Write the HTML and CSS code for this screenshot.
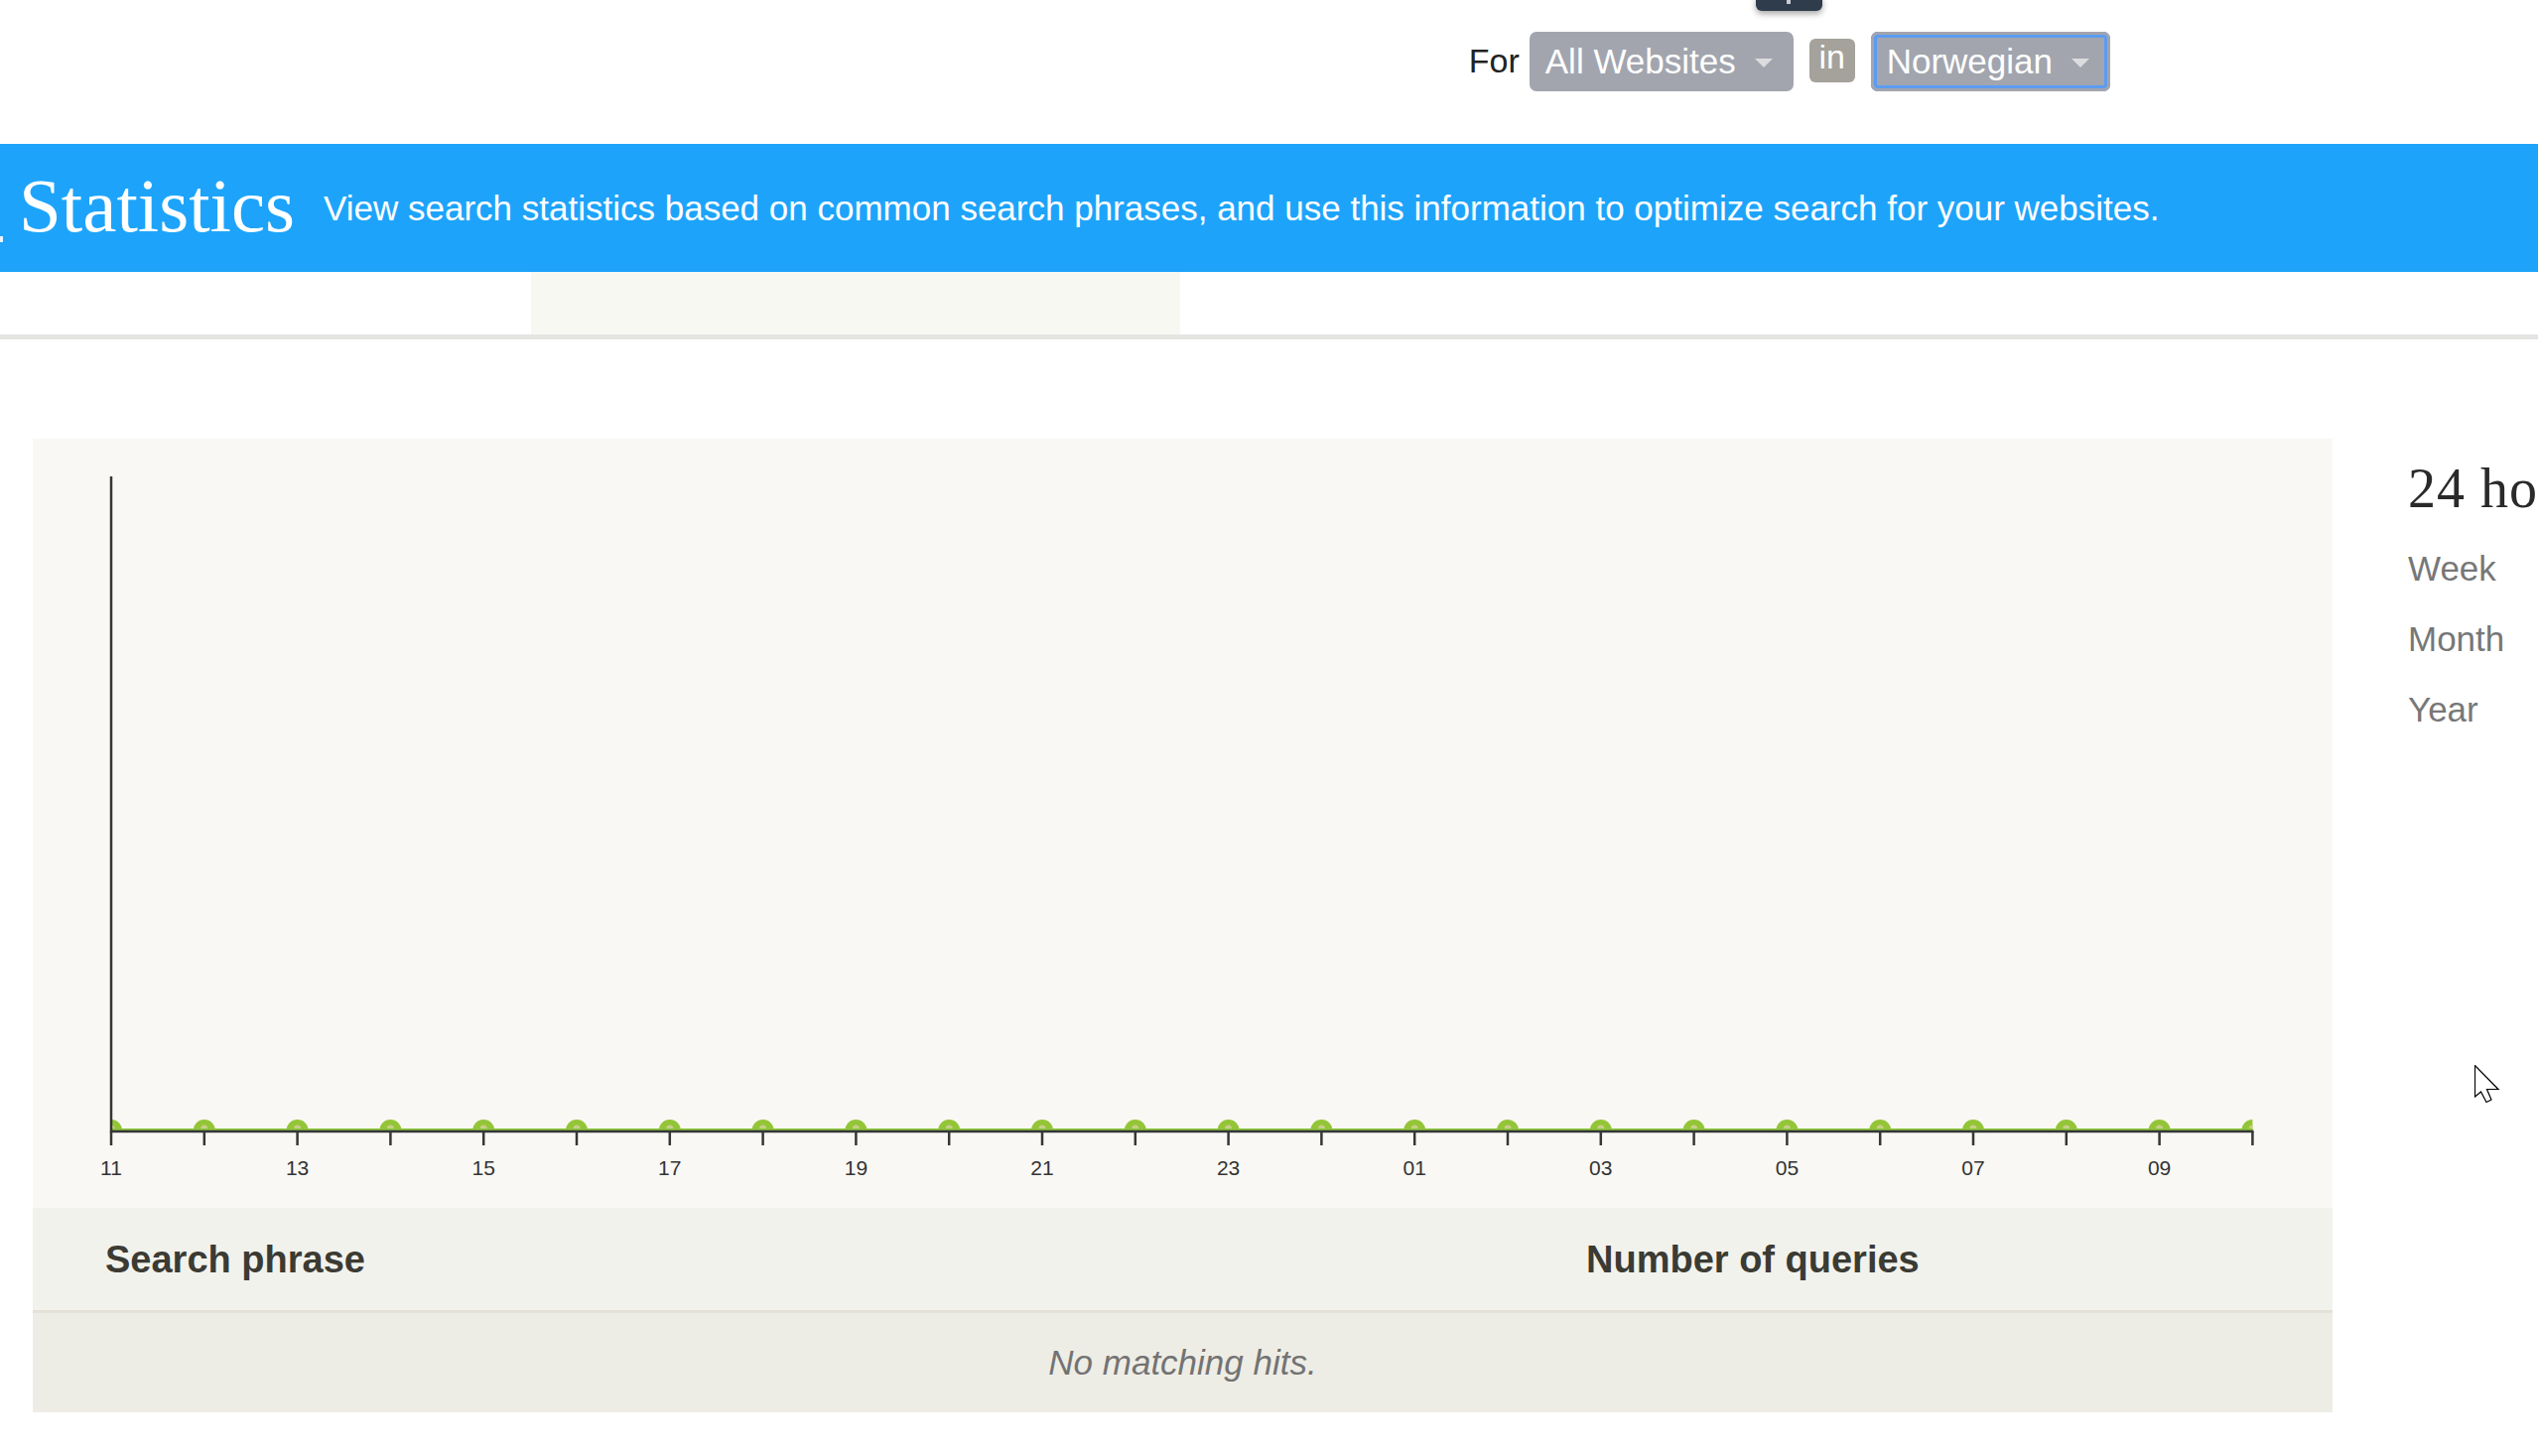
FILE: index.html
```html
<!DOCTYPE html>
<html lang="en">
<head>
<meta charset="utf-8">
<title>Statistics</title>
<link rel="stylesheet" href="styles.css">
</head>
<body>
<div class="tip-stub"><span class="tip-mark"></span></div>

<header class="topbar">
  <div class="context">
    <span class="for-label">For</span>
    <button class="select">All Websites<span class="caret"></span></button>
    <span class="in-badge">in</span>
    <button class="select focused">Norwegian<span class="caret"></span></button>
  </div>
</header>

<section class="banner">
  <span class="edge-mark"></span>
  <h1 class="banner-title">Statistics</h1>
  <p class="banner-desc">View search statistics based on common search phrases, and use this information to optimize search for your websites.</p>
</section>

<nav class="tabstrip">
  <div class="tab-active"></div>
</nav>
<div class="rule"></div>

<main class="content">
  <div class="panel">
    <div class="chart">
      <svg width="2317" height="775" viewBox="0 0 2317 775">
        <defs>
          <clipPath id="plot"><rect x="79" y="0" width="2157.4" height="697"/></clipPath>
        </defs>
        <g clip-path="url(#plot)" class="dots">
          <g class="dot"><circle cx="79" cy="697" r="11"/><circle class="core" cx="79" cy="695" r="3.5"/></g>
          <g class="dot"><circle cx="172.8" cy="697" r="11"/><circle class="core" cx="172.8" cy="695" r="3.5"/></g>
          <g class="dot"><circle cx="266.6" cy="697" r="11"/><circle class="core" cx="266.6" cy="695" r="3.5"/></g>
          <g class="dot"><circle cx="360.4" cy="697" r="11"/><circle class="core" cx="360.4" cy="695" r="3.5"/></g>
          <g class="dot"><circle cx="454.2" cy="697" r="11"/><circle class="core" cx="454.2" cy="695" r="3.5"/></g>
          <g class="dot"><circle cx="548" cy="697" r="11"/><circle class="core" cx="548" cy="695" r="3.5"/></g>
          <g class="dot"><circle cx="641.8" cy="697" r="11"/><circle class="core" cx="641.8" cy="695" r="3.5"/></g>
          <g class="dot"><circle cx="735.6" cy="697" r="11"/><circle class="core" cx="735.6" cy="695" r="3.5"/></g>
          <g class="dot"><circle cx="829.4" cy="697" r="11"/><circle class="core" cx="829.4" cy="695" r="3.5"/></g>
          <g class="dot"><circle cx="923.2" cy="697" r="11"/><circle class="core" cx="923.2" cy="695" r="3.5"/></g>
          <g class="dot"><circle cx="1017" cy="697" r="11"/><circle class="core" cx="1017" cy="695" r="3.5"/></g>
          <g class="dot"><circle cx="1110.8" cy="697" r="11"/><circle class="core" cx="1110.8" cy="695" r="3.5"/></g>
          <g class="dot"><circle cx="1204.6" cy="697" r="11"/><circle class="core" cx="1204.6" cy="695" r="3.5"/></g>
          <g class="dot"><circle cx="1298.4" cy="697" r="11"/><circle class="core" cx="1298.4" cy="695" r="3.5"/></g>
          <g class="dot"><circle cx="1392.2" cy="697" r="11"/><circle class="core" cx="1392.2" cy="695" r="3.5"/></g>
          <g class="dot"><circle cx="1486" cy="697" r="11"/><circle class="core" cx="1486" cy="695" r="3.5"/></g>
          <g class="dot"><circle cx="1579.8" cy="697" r="11"/><circle class="core" cx="1579.8" cy="695" r="3.5"/></g>
          <g class="dot"><circle cx="1673.6" cy="697" r="11"/><circle class="core" cx="1673.6" cy="695" r="3.5"/></g>
          <g class="dot"><circle cx="1767.4" cy="697" r="11"/><circle class="core" cx="1767.4" cy="695" r="3.5"/></g>
          <g class="dot"><circle cx="1861.2" cy="697" r="11"/><circle class="core" cx="1861.2" cy="695" r="3.5"/></g>
          <g class="dot"><circle cx="1955" cy="697" r="11"/><circle class="core" cx="1955" cy="695" r="3.5"/></g>
          <g class="dot"><circle cx="2048.8" cy="697" r="11"/><circle class="core" cx="2048.8" cy="695" r="3.5"/></g>
          <g class="dot"><circle cx="2142.6" cy="697" r="11"/><circle class="core" cx="2142.6" cy="695" r="3.5"/></g>
          <g class="dot"><circle cx="2236.4" cy="697" r="11"/><circle class="core" cx="2236.4" cy="695" r="3.5"/></g>
        </g>
        <line class="series" x1="79" y1="696" x2="2236.4" y2="696"/>
        <line class="axis" x1="79" y1="38" x2="79" y2="699"/>
        <line class="axis" x1="78" y1="698" x2="2237.5" y2="698"/>
        <g class="ticks">
          <line x1="79" y1="698" x2="79" y2="712"/>
          <line x1="172.8" y1="698" x2="172.8" y2="712"/>
          <line x1="266.6" y1="698" x2="266.6" y2="712"/>
          <line x1="360.4" y1="698" x2="360.4" y2="712"/>
          <line x1="454.2" y1="698" x2="454.2" y2="712"/>
          <line x1="548" y1="698" x2="548" y2="712"/>
          <line x1="641.8" y1="698" x2="641.8" y2="712"/>
          <line x1="735.6" y1="698" x2="735.6" y2="712"/>
          <line x1="829.4" y1="698" x2="829.4" y2="712"/>
          <line x1="923.2" y1="698" x2="923.2" y2="712"/>
          <line x1="1017" y1="698" x2="1017" y2="712"/>
          <line x1="1110.8" y1="698" x2="1110.8" y2="712"/>
          <line x1="1204.6" y1="698" x2="1204.6" y2="712"/>
          <line x1="1298.4" y1="698" x2="1298.4" y2="712"/>
          <line x1="1392.2" y1="698" x2="1392.2" y2="712"/>
          <line x1="1486" y1="698" x2="1486" y2="712"/>
          <line x1="1579.8" y1="698" x2="1579.8" y2="712"/>
          <line x1="1673.6" y1="698" x2="1673.6" y2="712"/>
          <line x1="1767.4" y1="698" x2="1767.4" y2="712"/>
          <line x1="1861.2" y1="698" x2="1861.2" y2="712"/>
          <line x1="1955" y1="698" x2="1955" y2="712"/>
          <line x1="2048.8" y1="698" x2="2048.8" y2="712"/>
          <line x1="2142.6" y1="698" x2="2142.6" y2="712"/>
          <line x1="2236.4" y1="698" x2="2236.4" y2="712"/>
        </g>
        <g class="labels">
          <text x="79" y="742">11</text>
          <text x="266.6" y="742">13</text>
          <text x="454.2" y="742">15</text>
          <text x="641.8" y="742">17</text>
          <text x="829.4" y="742">19</text>
          <text x="1017" y="742">21</text>
          <text x="1204.6" y="742">23</text>
          <text x="1392.2" y="742">01</text>
          <text x="1579.8" y="742">03</text>
          <text x="1767.4" y="742">05</text>
          <text x="1955" y="742">07</text>
          <text x="2142.6" y="742">09</text>
        </g>
      </svg>
    </div>
    <div class="table">
      <div class="thead">
        <div class="th">Search phrase</div>
        <div class="th">Number of queries</div>
      </div>
      <div class="empty">No matching hits.</div>
    </div>
  </div>

  <aside class="periods">
    <div class="period-current">24 hours</div>
    <ul class="period-list">
      <li>Week</li>
      <li>Month</li>
      <li>Year</li>
    </ul>
  </aside>
</main>

<svg class="cursor" width="26" height="40" viewBox="0 0 26 40">
  <path d="M0.5 0.5 L0.5 32 L6.5 27 L12 37.5 L17 35 L12.5 24.5 L24 24.5 Z" fill="#fff" stroke="#000" stroke-width="1.2" stroke-linejoin="miter"/>
</svg>
</body>
</html>
```
FILE: styles.css
```css
html, body {
  margin: 0;
  padding: 0;
  overflow: hidden;
  background: #ffffff;
}

body {
  font-family: "Liberation Sans", Arial, sans-serif;
  color: #333;
  position: relative;
  width: 2557px;
  min-height: 1467px;
}

/* --- dark tooltip stub peeking from the top --- */
.tip-stub {
  position: absolute;
  left: 1769px;
  top: -6px;
  width: 67px;
  height: 17px;
  background: #2e3c4b;
  border-radius: 6px;
  box-shadow: 0 3px 6px rgba(0, 0, 0, 0.35);
}
.tip-mark {
  position: absolute;
  left: 31px;
  top: 6px;
  width: 4px;
  height: 4px;
  background: #c9ced4;
}

/* --- top context bar --- */
.topbar {
  height: 145px;
  box-sizing: border-box;
  padding-top: 32px;
}
.context {
  display: flex;
  align-items: center;
  justify-content: flex-end;
  padding-right: 431px;
  height: 60px;
}
.for-label {
  font-size: 34px;
  color: #222;
  margin-right: 10px;
  position: relative;
  top: -1px;
}
.select {
  font-family: "Liberation Sans", Arial, sans-serif;
  font-size: 35px;
  color: #fff;
  background: #a2a5ae;
  border: none;
  border-radius: 7px;
  height: 60px;
  padding: 0 21px 0 16px;
  display: flex;
  align-items: center;
  cursor: pointer;
}
.select.focused {
  box-shadow: inset 0 0 0 3px #a2a5ae, inset 0 0 0 6px #5b9cf3;
}
.caret {
  display: inline-block;
  width: 0;
  height: 0;
  border-left: 9px solid transparent;
  border-right: 9px solid transparent;
  border-top: 9px solid #dcdcde;
  margin-left: 19px;
  margin-top: 2px;
}
.in-badge {
  font-size: 34px;
  color: #fff;
  background: #a4a29b;
  border-radius: 6px;
  width: 46px;
  height: 44px;
  display: flex;
  align-items: center;
  justify-content: center;
  margin: -3px 16px 0;
  box-sizing: border-box;
  padding-bottom: 6px;
}

/* --- blue banner --- */
.banner {
  position: relative;
  height: 129px;
  background: #1da4fa;
  display: flex;
  align-items: center;
  padding-left: 19px;
}
.edge-mark {
  position: absolute;
  left: 0;
  top: 93px;
  width: 3px;
  height: 6px;
  background: #e8f4fe;
}
.banner-title {
  margin: 0;
  font-family: "Liberation Serif", "Times New Roman", serif;
  font-weight: normal;
  font-size: 77px;
  line-height: 77px;
  color: #fff;
  position: relative;
  top: -2px;
}
.banner-desc {
  margin: 0 0 0 29px;
  font-size: 35px;
  line-height: 35px;
  color: #fff;
}

/* --- tab strip --- */
.tabstrip {
  height: 63px;
  display: flex;
}
.tab-active {
  margin-left: 535px;
  width: 654px;
  background: #f8f8f3;
}
.rule {
  height: 5px;
  background: #e4e4e2;
}

/* --- content --- */
.content {
  display: flex;
  align-items: flex-start;
  padding: 100px 0 0 33px;
  gap: 76px;
}
.panel {
  width: 2317px;
  flex: none;
}
.chart {
  height: 775px;
  background: #f9f8f4;
}
.chart svg {
  display: block;
}
.dot circle {
  fill: #93c537;
}
.dot circle.core {
  fill: #c6cf86;
}
.series {
  stroke: #8cc63f;
  stroke-width: 2;
}
.axis {
  stroke: #363636;
  stroke-width: 2.5;
}
.ticks line {
  stroke: #363636;
  stroke-width: 2.5;
}
.labels text {
  font-family: "Liberation Sans", Arial, sans-serif;
  font-size: 21px;
  fill: #333;
  text-anchor: middle;
}

.table {
  background: #f2f2ed;
}
.thead {
  display: grid;
  grid-template-columns: 1492px 1fr;
  padding-left: 73px;
  height: 103px;
  align-items: center;
  border-bottom: 3px solid #e3e1d8;
}
.th {
  font-size: 38px;
  font-weight: bold;
  color: #3b3b33;
  padding-top: 2px;
}
.empty {
  height: 100px;
  background: #eeede5;
  display: flex;
  align-items: center;
  justify-content: center;
  font-size: 35px;
  font-style: italic;
  color: #737373;
}

/* --- period nav --- */
.periods {
  flex: none;
  padding-top: 20px;
  white-space: nowrap;
}
.period-current {
  font-family: "Liberation Serif", "Times New Roman", serif;
  font-size: 56px;
  line-height: 60px;
  letter-spacing: 1px;
  color: #2a2a2a;
}
.period-list {
  list-style: none;
  margin: 15px 0 0;
  padding: 0;
}
.period-list li {
  font-size: 35px;
  line-height: 71px;
  color: #777;
}

/* mouse pointer overlay */
.cursor {
  position: absolute;
  left: 2493px;
  top: 1073px;
}
```
